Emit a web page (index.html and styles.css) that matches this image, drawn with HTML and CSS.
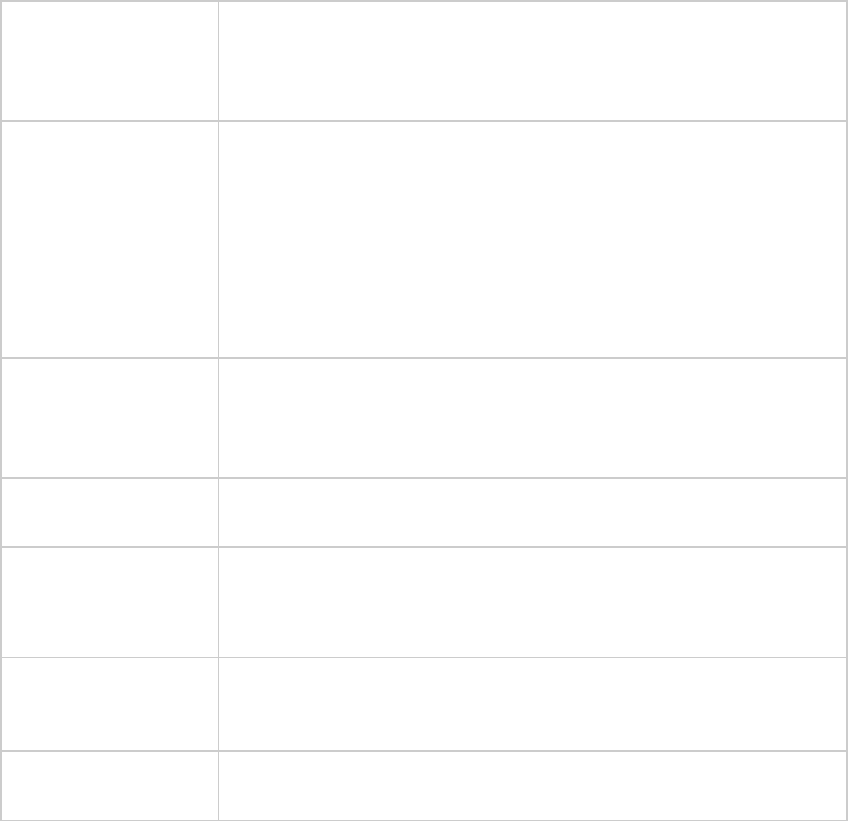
FILE: index.html
```html
<!DOCTYPE html>
<html lang="en">
<head>
<meta charset="utf-8">
<title>Table</title>
<link rel="stylesheet" href="styles.css">
</head>
<body>
<div class="table">
  <div class="row r1"><div class="label"></div><div class="value"></div></div>
  <div class="row r2"><div class="label"></div><div class="value"></div></div>
  <div class="row r3"><div class="label"></div><div class="value"></div></div>
  <div class="row r4"><div class="label"></div><div class="value"></div></div>
  <div class="row r5 thin"><div class="label"></div><div class="value"></div></div>
  <div class="row r6"><div class="label"></div><div class="value"></div></div>
  <div class="row r7 thin"><div class="label"></div><div class="value"></div></div>
</div>
</body>
</html>
```
FILE: styles.css
```css
html, body {
  margin: 0;
  padding: 0;
  background: #ffffff;
  font-family: "Liberation Sans", Arial, sans-serif;
}
.table {
  width: 848px;
  box-sizing: border-box;
  border: 2px solid #cccccc;
  border-bottom: 0;
}
.row {
  display: flex;
  box-sizing: border-box;
  border-bottom: 2px solid #cccccc;
}
.row.thin {
  border-bottom-width: 1px;
}
.label {
  width: 216px;
  flex: none;
  border-right: 1px solid #cccccc;
}
.value {
  flex: 1;
}
.r1 { height: 120px; }
.r2 { height: 237px; }
.r3 { height: 120px; }
.r4 { height: 69px; }
.r5 { height: 110px; }
.r6 { height: 94px; }
.r7 { height: 69px; }
```
